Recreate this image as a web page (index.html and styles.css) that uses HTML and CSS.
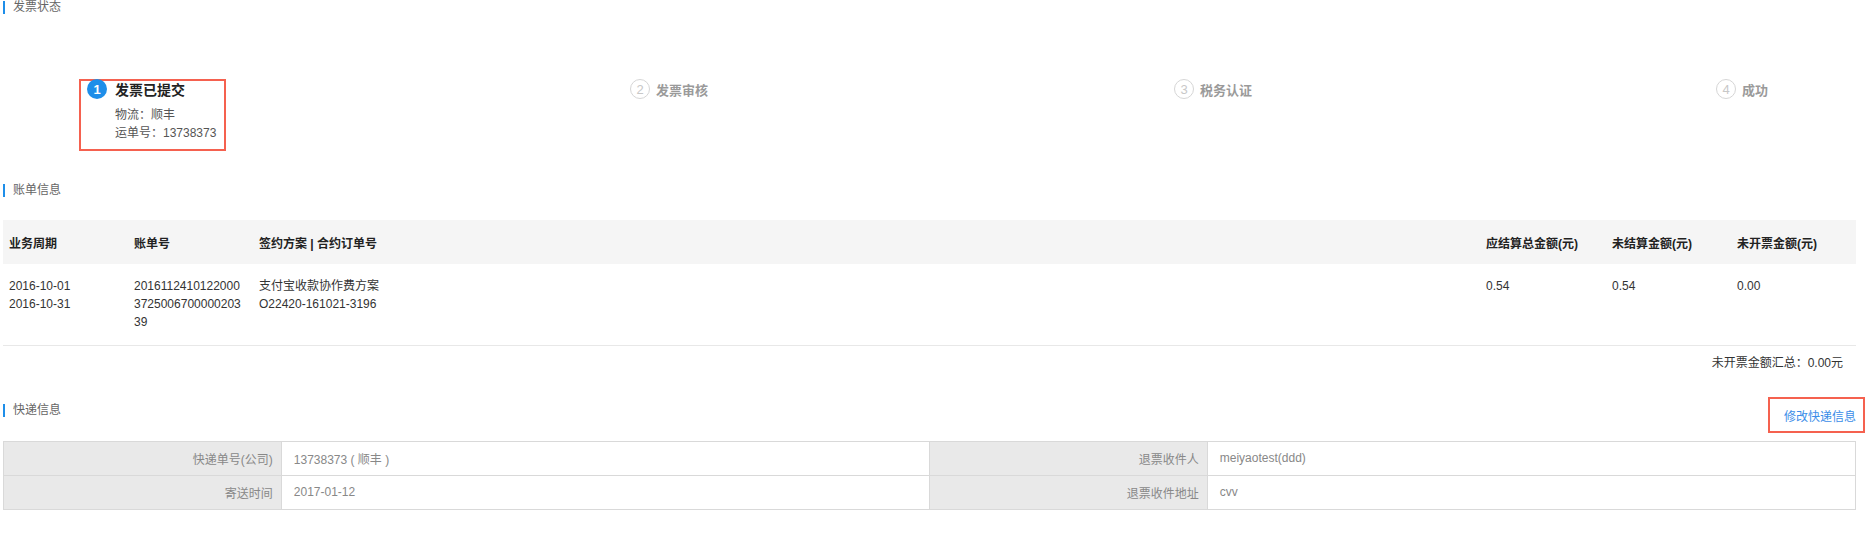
FILE: index.html
```html
<!DOCTYPE html>
<html lang="zh-CN">
<head>
<meta charset="utf-8">
<title>发票详情</title>
<link rel="stylesheet" href="styles.css">
</head>
<body>
<div class="page">
  <div class="sec-title first"><span class="bar">发票状态</span></div>

  <div class="steps">
    <div class="step active">
      <div class="step-head"><span class="num">1</span><span class="step-name">发票已提交</span></div>
      <div class="step-detail">物流：顺丰</div>
      <div class="step-detail">运单号：13738373</div>
    </div>
    <div class="step">
      <div class="step-head"><span class="num">2</span><span class="step-name">发票审核</span></div>
    </div>
    <div class="step">
      <div class="step-head"><span class="num">3</span><span class="step-name">税务认证</span></div>
    </div>
    <div class="step">
      <div class="step-head"><span class="num">4</span><span class="step-name">成功</span></div>
    </div>
  </div>

  <div class="sec-title second"><span class="bar">账单信息</span></div>

  <table class="bill">
    <colgroup>
      <col class="c1"><col class="c2"><col class="c3"><col class="c4"><col class="c5"><col class="c6">
    </colgroup>
    <thead>
      <tr>
        <th>业务周期</th>
        <th>账单号</th>
        <th>签约方案 | 合约订单号</th>
        <th>应结算总金额(元)</th>
        <th>未结算金额(元)</th>
        <th>未开票金额(元)</th>
      </tr>
    </thead>
    <tbody>
      <tr>
        <td>2016-10-01<br>2016-10-31</td>
        <td><div class="billno">2016112410122000372500670000020339</div></td>
        <td>支付宝收款协作费方案<br>O22420-161021-3196</td>
        <td>0.54</td>
        <td>0.54</td>
        <td>0.00</td>
      </tr>
    </tbody>
  </table>
  <div class="summary">未开票金额汇总：0.00元</div>

  <div class="express-head">
    <div class="sec-title third"><span class="bar">快递信息</span></div>
    <div class="edit-box"><a class="edit-link" href="#">修改快递信息</a></div>
  </div>

  <table class="info">
    <colgroup>
      <col class="lab"><col class="val"><col class="lab"><col class="val">
    </colgroup>
    <tr>
      <th>快递单号(公司)</th>
      <td>13738373 ( 顺丰 )</td>
      <th>退票收件人</th>
      <td>meiyaotest(ddd)</td>
    </tr>
    <tr>
      <th>寄送时间</th>
      <td>2017-01-12</td>
      <th>退票收件地址</th>
      <td>cvv</td>
    </tr>
  </table>
</div>
</body>
</html>
```

FILE: styles.css
```css
* { box-sizing: border-box; }
html, body { margin: 0; padding: 0; background: #fff; }
body {
  font-family: "Liberation Sans", Arial, "Noto Sans CJK SC", sans-serif;
  font-size: 12px;
  color: #333;
  width: 1871px;
  height: 539px;
  overflow: hidden;
}
.page {
  padding-left: 3px;
  width: 1856px;
}

.sec-title {
  height: 14px;
  display: flex;
  align-items: center;
}
.sec-title .bar {
  border-left: 2px solid #1e8ee9;
  padding-left: 8px;
  height: 13px;
  line-height: 13px;
  color: #666;
  font-size: 12px;
}
.sec-title.second { margin-top: 32px; }

/* steps */
.steps {
  margin-top: 65px;
  padding-left: 76px;
  display: grid;
  grid-template-columns: 543px 544px 542px auto;
  align-items: start;
}
.step {
  border: 2px solid transparent;
  padding: 0 8px 6px 6px;
  justify-self: start;
  white-space: nowrap;
}
.step.active {
  border-color: #f5614f;
  width: 147px;
  height: 72px;
}
.step-head {
  display: flex;
  align-items: center;
  height: 20px;
  margin-top: -2px;
}
.num {
  width: 20px;
  height: 20px;
  border-radius: 50%;
  border: 1px solid #d6d6d6;
  color: #c8c8c8;
  font-size: 13px;
  display: flex;
  align-items: center;
  justify-content: center;
  margin-right: 6px;
  margin-left: 0;
}
.step-name {
  font-size: 13px;
  font-weight: bold;
  color: #9a9a9a;
}
.step.active .num {
  border: none;
  background: #1e8ee9;
  color: #fff;
  font-weight: bold;
  margin-right: 8px;
}
.step.active .step-name {
  font-size: 14px;
  color: #222;
}
.step-detail {
  padding-left: 28px;
  line-height: 18px;
  color: #555;
}
.step-head + .step-detail { margin-top: 7px; }

/* bill table */
.bill {
  margin-top: 23px;
  width: 1853px;
  border-collapse: collapse;
  table-layout: fixed;
}
.bill .c1 { width: 125px; }
.bill .c2 { width: 125px; }
.bill .c3 { width: 1227px; }
.bill .c4 { width: 126px; }
.bill .c5 { width: 125px; }
.bill .c6 { width: 125px; }
.bill th {
  background: #f5f5f5;
  height: 44px;
  text-align: left;
  font-weight: bold;
  color: #222;
  padding: 0 0 0 6px;
  font-size: 12px;
}
.bill td {
  vertical-align: top;
  padding: 13px 0 13px 6px;
  line-height: 18px;
  color: #333;
  border-bottom: 1px solid #e8e8e8;
  height: 81px;
}
.billno {
  width: 110px;
  word-break: break-all;
}
.summary {
  text-align: right;
  padding-right: 13px;
  margin-top: 9px;
  line-height: 17px;
  color: #333;
}

/* express */
.express-head {
  margin-top: 25px;
  display: flex;
  justify-content: space-between;
  align-items: flex-start;
  margin-right: -9px;
}
.express-head .sec-title { margin-top: 7px; }
.edit-box {
  border: 2px solid #f5614f;
  width: 97px;
  height: 36px;
  padding: 11px 7px 0 14px;
}
.edit-link {
  display: block;
  color: #3b8de8;
  text-decoration: none;
  line-height: 14px;
  font-size: 12px;
  white-space: nowrap;
}

.info {
  margin-top: 8px;
  width: 1853px;
  border-collapse: collapse;
  table-layout: fixed;
}
.info .lab { width: 15%; }
.info .val { width: 35%; }
.info th, .info td {
  border: 1px solid #d9d9d9;
  height: 34px;
  font-weight: normal;
  font-size: 12px;
  color: #888;
  padding: 0;
}
.info th {
  background: #e9e9e9;
  text-align: right;
  padding-right: 8px;
}
.info td {
  text-align: left;
  padding-left: 12px;
  background: #fff;
}
```
